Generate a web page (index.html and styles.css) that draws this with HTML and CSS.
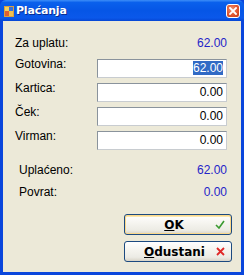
FILE: index.html
```html
<!DOCTYPE html>
<html>
<head>
<meta charset="utf-8">
<link rel="stylesheet" href="styles.css">
</head>
<body>
<div class="window">
  <div class="titlebar">
    <svg class="app-icon" width="10" height="11" viewBox="0 0 10 11">
      <rect x="0" y="0" width="10" height="11" fill="#d9a040"/>
      <rect x="1" y="1" width="4" height="4" fill="#f0d060"/>
      <rect x="5" y="1" width="4" height="4" fill="#3a70d8"/>
      <rect x="1" y="5" width="4" height="5" fill="#e06030"/>
      <rect x="5" y="5" width="4" height="5" fill="#f0c050"/>
    </svg>
    <span class="title">Plaćanja</span>
    <span class="close">
      <svg width="8" height="8" viewBox="0 0 8 8"><path d="M1 1 L7 7 M7 1 L1 7" stroke="#fff" stroke-width="1.8" stroke-linecap="square"/></svg>
    </span>
  </div>
  <div class="client">
    <div class="info-row top">
      <span class="lbl">Za uplatu:</span>
      <span class="val">62.00</span>
    </div>
    <div class="fields">
      <div class="field"><span class="lbl">Gotovina:</span><div class="input"><span class="sel">62.00</span></div></div>
      <div class="field"><span class="lbl">Kartica:</span><div class="input">0.00</div></div>
      <div class="field"><span class="lbl">Ček:</span><div class="input">0.00</div></div>
      <div class="field"><span class="lbl">Virman:</span><div class="input">0.00</div></div>
    </div>
    <div class="summary">
      <div class="info-row ind"><span class="lbl">Uplaćeno:</span><span class="val">62.00</span></div>
      <div class="info-row ind"><span class="lbl">Povrat:</span><span class="val">0.00</span></div>
    </div>
    <div class="buttons">
      <div class="btn default"><span class="btn-text"><u>O</u>K</span>
        <svg class="btn-icon" width="10" height="9" viewBox="0 0 10 9"><path d="M1 5 L4 8 L9 1" fill="none" stroke="#3a9a30" stroke-width="1.6"/></svg>
      </div>
      <div class="btn"><span class="btn-text"><u>O</u>dustani</span>
        <svg class="btn-icon" width="9" height="9" viewBox="0 0 9 9"><path d="M1 1 L8 8 M8 1 L1 8" stroke="#e02828" stroke-width="1.8"/></svg>
      </div>
    </div>
  </div>
</div>
</body>
</html>
```
FILE: styles.css
```css
html, body {
  margin: 0;
  padding: 0;
  background: #ece9d8;
}
.window {
  width: 244px;
  height: 275px;
  box-sizing: border-box;
  display: flex;
  flex-direction: column;
  background: #0a46dc;
  font-family: "Liberation Sans", Arial, sans-serif;
  font-size: 12px;
  color: #000;
}
.titlebar {
  height: 21px;
  flex: none;
  display: flex;
  align-items: center;
  padding: 0 4px 0 4px;
  background: linear-gradient(to bottom, #3d8ef8 0%, #0a60ec 12%, #0656e6 50%, #0a58ea 85%, #0646d4 100%);
  border-radius: 6px 6px 0 0;
}
.app-icon {
  flex: none;
  margin-left: 0;
  margin-top: 2px;
}
.title {
  margin-left: 2px;
  color: #fff;
  font-family: "DejaVu Sans", sans-serif;
  font-weight: bold;
  font-size: 11px;
  letter-spacing: -0.2px;
  text-shadow: 1px 1px 0 #0a2c90;
}
.close {
  margin-left: auto;
  width: 14px;
  height: 14px;
  box-sizing: border-box;
  border: 1px solid #fff;
  border-radius: 3px;
  background: radial-gradient(circle at 40% 35%, #f09070 0%, #e0552e 55%, #c43c18 100%);
  display: flex;
  align-items: center;
  justify-content: center;
}
.client {
  flex: 1;
  margin: 0 3px 3px 3px;
  background: #ece9d8;
  display: flex;
  flex-direction: column;
  padding: 15px 14px 0 12px;
}
.info-row {
  display: flex;
  justify-content: space-between;
  line-height: 14px;
  height: 14px;
}
.info-row.ind {
  padding-left: 4px;
}
.val {
  color: #2424c8;
}
.fields {
  margin-top: 9px;
  display: flex;
  flex-direction: column;
  gap: 5px;
}
.field {
  display: grid;
  grid-template-columns: 82px 130px;
  align-items: start;
}
.field .lbl {
  line-height: 14px;
  margin-top: -2px;
}
.input {
  height: 19px;
  box-sizing: border-box;
  border: 1px solid #8a939c;
  border-right-color: #c8ccd0;
  border-bottom-color: #c8ccd0;
  background: #fff;
  text-align: right;
  padding: 0 3px 0 0;
  line-height: 17px;
}
.sel {
  background: #316ac5;
  color: #fff;
}
.summary {
  margin-top: 13px;
  display: flex;
  flex-direction: column;
  gap: 8px;
}
.buttons {
  margin-top: 15px;
  display: flex;
  flex-direction: column;
  align-items: flex-end;
  gap: 6px;
  margin-right: -5px;
}
.btn {
  width: 108px;
  height: 21px;
  box-sizing: border-box;
  border: 1px solid #1c4a80;
  border-radius: 3px;
  background: linear-gradient(to bottom, #ffffff 0%, #f6f5f0 40%, #ecebe4 80%, #d8d4c8 100%);
  display: flex;
  align-items: center;
  position: relative;
  font-weight: bold;
  font-family: "DejaVu Sans", sans-serif;
  font-size: 12px;
}
.btn.default {
  box-shadow: inset 0 0 0 1px #fbd88a, inset 0 1px 0 1px #fce8b0;
}
.btn-text {
  flex: 1;
  text-align: center;
  padding-left: 8px;
}
.btn-icon {
  margin-right: 6px;
  flex: none;
}
```
